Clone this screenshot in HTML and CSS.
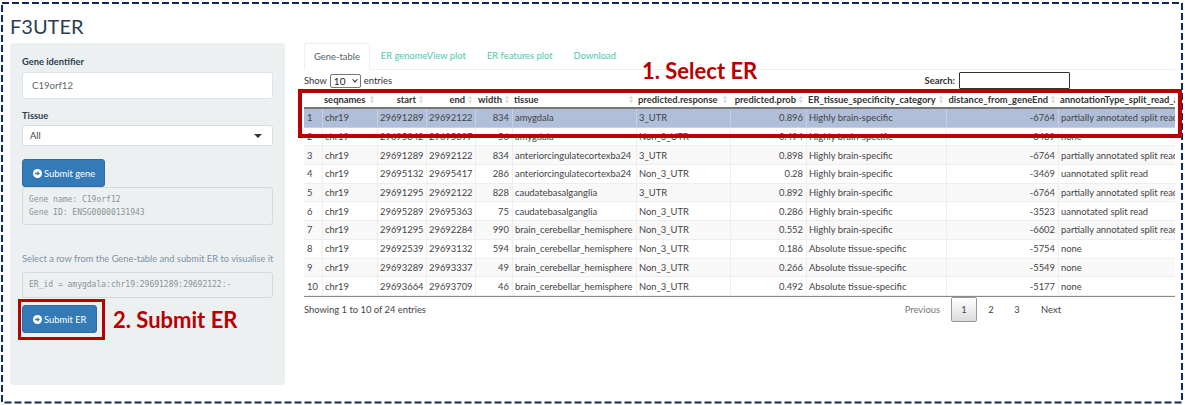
FILE: index.html
```html
<!DOCTYPE html>
<html lang="en">
<head>
  <meta charset="UTF-8">
  <title>F3UTER</title>
  <link rel="stylesheet" href="styles.css">
</head>
<body>

<div class="frame">
  <h1 class="title">F3UTER</h1>

  <div class="layout">
    <!-- sidebar -->
    <div class="side">
      <label class="lbl">Gene identifier</label>
      <div class="text-input">C19orf12</div>
      <label class="lbl tissue-lbl">Tissue</label>
      <div class="pick"><span>All</span><i class="caret"></i></div>
      <button class="btn gene-btn">
        <svg class="ico" viewBox="0 0 16 16"><circle cx="8" cy="8" r="8" fill="#fff"/><path d="M3.5 6.8h4.2V4.2L12.4 8l-4.7 3.8V9.2H3.5z" fill="#337ab7"/></svg>Submit gene
      </button>
      <pre class="out gene-out">Gene name: C19orf12
Gene ID: ENSG00000131943</pre>
      <p class="help">Select a row from the Gene-table and submit ER to visualise it</p>
      <pre class="out er-out">ER_id = amygdala:chr19:29691289:29692122:-</pre>
      <button class="btn er-btn">
        <svg class="ico" viewBox="0 0 16 16"><circle cx="8" cy="8" r="8" fill="#fff"/><path d="M3.5 6.8h4.2V4.2L12.4 8l-4.7 3.8V9.2H3.5z" fill="#337ab7"/></svg>Submit ER
      </button>
    </div>

    <!-- main -->
    <div class="main">
      <ul class="tabs">
        <li class="tab on">Gene-table</li>
        <li class="tab">ER genomeView plot</li>
        <li class="tab">ER features plot</li>
        <li class="tab">Download</li>
      </ul>

      <div class="tools">
        <div class="len">Show <span class="len-pick">10<i class="chev"></i></span> entries</div>
        <div class="search">Search: <span class="search-box"></span></div>
      </div>

      <div class="table-wrap">
        <table class="grid">
          <colgroup>
            <col class="c-id"><col class="c-seq"><col class="c-start"><col class="c-end"><col class="c-width"><col class="c-tissue"><col class="c-resp"><col class="c-prob"><col class="c-cat"><col class="c-dist"><col class="c-ann">
          </colgroup>
          <thead>
            <tr>
              <th></th>
              <th><div class="th">seqnames<i class="sort"></i></div></th>
              <th><div class="th r">start<i class="sort"></i></div></th>
              <th><div class="th r">end<i class="sort"></i></div></th>
              <th><div class="th r">width<i class="sort"></i></div></th>
              <th><div class="th">tissue<i class="sort"></i></div></th>
              <th><div class="th">predicted.response<i class="sort"></i></div></th>
              <th><div class="th r">predicted.prob<i class="sort"></i></div></th>
              <th><div class="th">ER_tissue_specificity_category<i class="sort"></i></div></th>
              <th><div class="th r">distance_from_geneEnd<i class="sort"></i></div></th>
              <th><div class="th">annotationType_split_read_annotation</div></th>
            </tr>
          </thead>
          <tbody>
            <tr class="sel"><td>1</td><td>chr19</td><td class="r">29691289</td><td class="r">29692122</td><td class="r">834</td><td>amygdala</td><td>3_UTR</td><td class="r">0.896</td><td>Highly brain-specific</td><td class="r">-6764</td><td>partially annotated split read</td></tr>
            <tr><td>2</td><td>chr19</td><td class="r">29695842</td><td class="r">29695897</td><td class="r">56</td><td>amygdala</td><td>Non_3_UTR</td><td class="r">0.494</td><td>Highly brain-specific</td><td class="r">-8489</td><td>none</td></tr>
            <tr><td>3</td><td>chr19</td><td class="r">29691289</td><td class="r">29692122</td><td class="r">834</td><td>anteriorcingulatecortexba24</td><td>3_UTR</td><td class="r">0.898</td><td>Highly brain-specific</td><td class="r">-6764</td><td>partially annotated split read</td></tr>
            <tr><td>4</td><td>chr19</td><td class="r">29695132</td><td class="r">29695417</td><td class="r">286</td><td>anteriorcingulatecortexba24</td><td>Non_3_UTR</td><td class="r">0.28</td><td>Highly brain-specific</td><td class="r">-3469</td><td>uannotated split read</td></tr>
            <tr><td>5</td><td>chr19</td><td class="r">29691295</td><td class="r">29692122</td><td class="r">828</td><td>caudatebasalganglia</td><td>3_UTR</td><td class="r">0.892</td><td>Highly brain-specific</td><td class="r">-6764</td><td>partially annotated split read</td></tr>
            <tr><td>6</td><td>chr19</td><td class="r">29695289</td><td class="r">29695363</td><td class="r">75</td><td>caudatebasalganglia</td><td>Non_3_UTR</td><td class="r">0.286</td><td>Highly brain-specific</td><td class="r">-3523</td><td>uannotated split read</td></tr>
            <tr><td>7</td><td>chr19</td><td class="r">29691295</td><td class="r">29692284</td><td class="r">990</td><td>brain_cerebellar_hemisphere</td><td>Non_3_UTR</td><td class="r">0.552</td><td>Highly brain-specific</td><td class="r">-6602</td><td>partially annotated split read</td></tr>
            <tr><td>8</td><td>chr19</td><td class="r">29692539</td><td class="r">29693132</td><td class="r">594</td><td>brain_cerebellar_hemisphere</td><td>Non_3_UTR</td><td class="r">0.186</td><td>Absolute tissue-specific</td><td class="r">-5754</td><td>none</td></tr>
            <tr><td>9</td><td>chr19</td><td class="r">29693289</td><td class="r">29693337</td><td class="r">49</td><td>brain_cerebellar_hemisphere</td><td>Non_3_UTR</td><td class="r">0.266</td><td>Absolute tissue-specific</td><td class="r">-5549</td><td>none</td></tr>
            <tr><td>10</td><td>chr19</td><td class="r">29693664</td><td class="r">29693709</td><td class="r">46</td><td>brain_cerebellar_hemisphere</td><td>Non_3_UTR</td><td class="r">0.492</td><td>Absolute tissue-specific</td><td class="r">-5177</td><td>none</td></tr>
          </tbody>
        </table>
      </div>

      <div class="foot">
        <div class="info">Showing 1 to 10 of 24 entries</div>
        <div class="pages">
          <span class="pg muted">Previous</span>
          <span class="pg cur">1</span>
          <span class="pg num">2</span>
          <span class="pg num">3</span>
          <span class="pg">Next</span>
        </div>
      </div>
    </div>
  </div>

  <!-- callouts drawn over the app -->
  <svg class="dash" viewBox="0 0 1185 405"><rect x="2" y="3" width="1180" height="399.5" fill="none" stroke="#0f2a5f" stroke-width="2" stroke-dasharray="7 3"/></svg>
  <div class="note note-select">1. Select ER</div>
  <div class="note note-submit">2. Submit ER</div>
  <div class="mark mark-row"></div>
  <div class="mark mark-btn"></div>
</div>

</body>
</html>
```

FILE: styles.css
```css
html,body{margin:0;padding:0;background:#fff}
body{font-family:"Lato",sans-serif;font-size:9.4px;color:#2c3e50;overflow:hidden}
*{box-sizing:border-box}

.frame{position:relative;width:1185px;height:405px;padding:4px 0 0 10px;overflow:hidden}
.dash{position:absolute;left:0;top:0;width:1185px;height:405px;pointer-events:none}
.title{margin:0;height:39px;padding-top:9px;font-size:20px;line-height:26px;font-weight:400;color:#2c3e50}

.layout{display:flex;gap:19px}

/* sidebar */
.side{width:275px;height:342px;background:#ecf0f1;border-radius:4px;padding:12px 12px 0}
.lbl{display:block;font-weight:700;font-size:9.3px;line-height:14px}
.text-input{margin-top:3px;height:27px;background:#fff;border:1px solid #dce4ec;border-radius:3px;padding:0 9px;line-height:26px;font-size:9.6px;color:#5a6a6b}
.tissue-lbl{margin-top:10px}
.pick{margin-top:2px;height:21px;background:#fff;border:1px solid #d8dcdd;border-radius:3px;padding:0 7px;line-height:20px;color:#444;display:flex;justify-content:space-between;align-items:center}
.caret{width:0;height:0;border-left:4px solid transparent;border-right:4px solid transparent;border-top:4px solid #333;margin-right:3px}

.btn{display:flex;align-items:center;padding:0 0 0 10px;background:#337ab7;border:1px solid #2e6da4;border-radius:3px;color:#fff;font:400 9.4px "Lato",sans-serif}
.ico{width:9px;height:9px;margin-right:2px;flex:none}
.gene-btn{margin-top:13px;width:83px;height:28px}
.er-btn{margin-top:7px;width:75px;height:28px}

.out{margin:0;background:#ecf0f1;border:1px solid #d5d9da;border-radius:3px;padding:0 6px;font-family:"DejaVu Sans Mono",monospace;font-size:8px;color:#8a9596}
.gene-out{height:38px;line-height:13px;padding-top:5px}
.er-out{height:26px;line-height:24px}
.help{margin:27px 0 6px;font-size:9.3px;line-height:14px;color:#7f93a8;white-space:nowrap}

/* main */
.main{width:871px}
.tabs{list-style:none;margin:0;padding:0;display:flex;height:27px;border-bottom:1px solid #ecf0f1}
.tab{padding:0 10px;line-height:26px;color:#18bc9c;opacity:.8;margin-right:1px}
.tab.on{color:#55646a;opacity:1;background:#fff;border:1px solid #ecf0f1;border-bottom-color:#fff;border-radius:3px 3px 0 0;height:27px;line-height:25px;padding:0 9px}

.tools{display:flex;justify-content:space-between;align-items:center;height:21px;padding-right:105px}
.len,.search{font-size:9.4px;color:#333;display:flex;align-items:center;gap:3px}
.len-pick{display:inline-flex;align-items:center;justify-content:space-between;width:31px;height:14px;border:1px solid #767676;border-radius:2px;padding:0 3px;color:#222;background:#fff;font-size:10px}
.chev{width:4px;height:4px;border-right:1px solid #222;border-bottom:1px solid #222;transform:rotate(45deg) translate(-1px,-1px)}
.search{font-weight:700;gap:4px}
.search-box{width:111px;height:17px;border:1px solid #333;border-radius:1px;background:#fff}

.table-wrap{width:871px;overflow:hidden;margin-top:1px}
.grid{table-layout:fixed;border-collapse:separate;border-spacing:0;width:871px;font-size:9.4px;color:#444;border-bottom:1px solid #8a8a8a}
.c-id{width:18px}.c-seq{width:55px}.c-start{width:49px}.c-end{width:49px}.c-width{width:37px}.c-tissue{width:124px}
.c-resp{width:94px}.c-prob{width:76px}.c-cat{width:140px}.c-dist{width:112px}.c-ann{width:117px}
.grid th{height:17px;padding:0 2px;font-weight:700;color:#333;border-bottom:2px solid #777;overflow:hidden}
.th{display:flex;align-items:center;justify-content:space-between;white-space:nowrap;gap:2px}
.th.r{justify-content:flex-end}
.sort{flex:none;width:5px;height:9px;margin-left:1px;position:relative}
.sort::before,.sort::after{content:"";position:absolute;left:0;border-left:2.5px solid transparent;border-right:2.5px solid transparent}
.sort::before{top:0;border-bottom:4px solid #dcdcdc}
.sort::after{bottom:0;border-top:4px solid #dcdcdc}
.grid td{height:18.7px;padding:0 3px 0 2px;white-space:nowrap;overflow:hidden;border-left:1px solid #eee;border-bottom:1px solid #eee}
.grid td:first-child{border-left:0;padding-left:3px}
.grid td.r{text-align:right}
.grid tbody tr:nth-child(odd) td{background:#f9f9f9}
.grid tbody tr.sel td{background:#b0bed9;border-color:#c6d0e2}

.foot{display:flex;justify-content:space-between;align-items:flex-start}
.info{padding-top:7px;color:#444}
.pages{display:flex;align-items:center;padding-right:114px}
.pg{height:25px;line-height:25px;color:#444;text-align:center}
.pg.muted{color:#777;margin-right:11px}
.pg.num{width:26px}
.pg.cur{width:26px;border:1px solid #979797;border-radius:2px;line-height:23px;background:linear-gradient(#fff,#dcdcdc);margin-right:1px}
.pg:last-child{margin-left:11px}

/* callouts */
.note{position:absolute;font-family:"Lato",sans-serif;font-weight:700;font-size:22px;line-height:26px;color:#b90000;white-space:nowrap}
.note-select{left:642px;top:58px}
.note-submit{left:113px;top:307px}
.mark{position:absolute;border:4px solid #b90000}
.mark-row{left:298px;top:89px;width:884px;height:49px}
.mark-btn{left:18px;top:299px;width:87px;height:41px;border-width:3px}
```
